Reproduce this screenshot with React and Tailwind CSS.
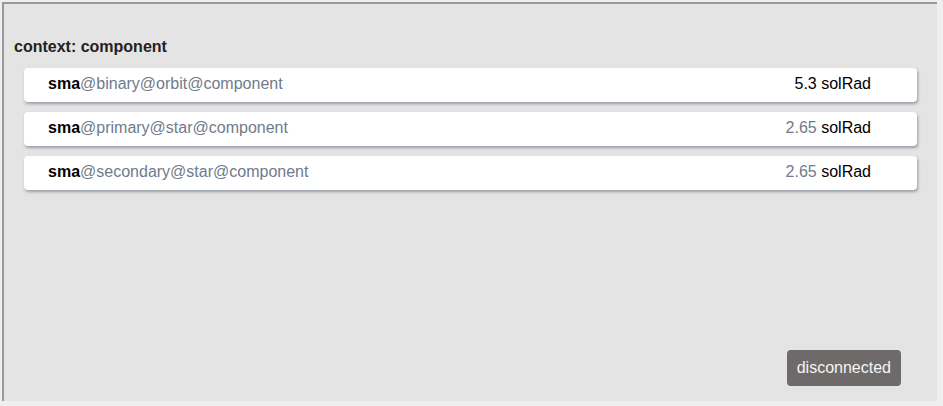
const rows = [
  { name: "binary@orbit@component", value: "5.3", dim: false },
  { name: "primary@star@component", value: "2.65", dim: true },
  { name: "secondary@star@component", value: "2.65", dim: true },
]

const ParamRow = ({ name, value, dim }) => (
  <div className="flex items-center justify-between h-[34px] bg-white rounded-[4px] shadow-[1px_2px_3px_rgba(90,100,120,0.55)] pl-[24px] pr-[46px] pb-[3px] text-[16px]">
    <span>
      <span className="font-bold text-black">sma</span>
      <span className="text-[#6f7b8b]">@{name}</span>
    </span>
    <span>
      <span className={dim ? "text-[#6f7b8b]" : "text-black"}>{value}</span>
      <span className="text-black"> solRad</span>
    </span>
  </div>
)

export default function App() {
  return (
    <div className="w-[943px] h-[406px] bg-[#efefef] pl-[2px] pt-[2px] font-['Liberation_Sans',Arial,sans-serif]">
      <div className="relative w-[935px] h-[399px] bg-[#e4e4e4] border-t-2 border-l-2 border-[#999999] pt-[33px] pl-[10px] pr-[20px]">
        <div className="text-[16px] font-bold text-[#222] leading-[20px]">context: component</div>
        <div className="flex flex-col gap-[10px] mt-[11px] ml-[10px]">
          {rows.map((r) => (
            <ParamRow key={r.name} {...r} />
          ))}
        </div>
        <div className="absolute right-[36px] bottom-[15px] bg-[#6e6a69] text-[#f5f5f5] text-[16px] rounded-[4px] px-[10px] h-[36px] flex items-center">
          disconnected
        </div>
      </div>
    </div>
  )
}
